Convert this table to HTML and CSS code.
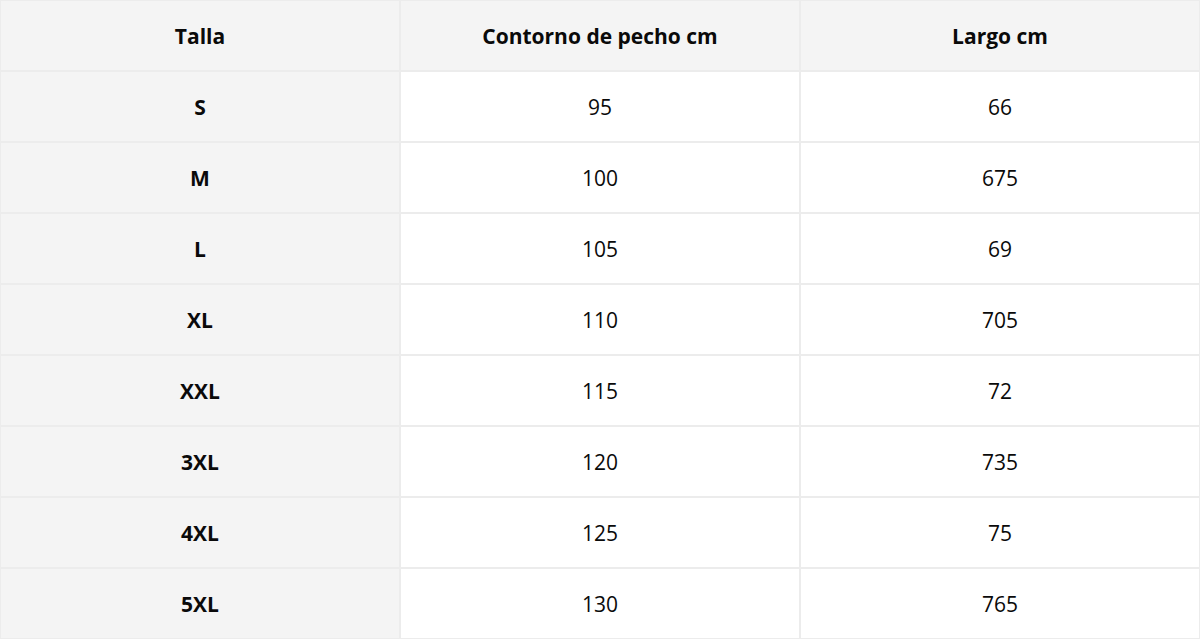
FILE: index.html
```html
<!DOCTYPE html>
<html lang="es">
<head>
<meta charset="utf-8">
<link rel="stylesheet" href="styles.css">
</head>
<body>
<table class="sizes">
  <thead>
    <tr><th>Talla</th><th>Contorno de pecho cm</th><th>Largo cm</th></tr>
  </thead>
  <tbody>
    <tr><th>S</th><td>95</td><td>66</td></tr>
    <tr><th>M</th><td>100</td><td>675</td></tr>
    <tr><th>L</th><td>105</td><td>69</td></tr>
    <tr><th>XL</th><td>110</td><td>705</td></tr>
    <tr><th>XXL</th><td>115</td><td>72</td></tr>
    <tr><th>3XL</th><td>120</td><td>735</td></tr>
    <tr><th>4XL</th><td>125</td><td>75</td></tr>
    <tr><th>5XL</th><td>130</td><td>765</td></tr>
  </tbody>
</table>
</body>
</html>
```
FILE: styles.css
```css
html, body {
  margin: 0;
  padding: 0;
  background: #ffffff;
}
.sizes {
  width: 1200px;
  border-collapse: separate;
  border-spacing: 0;
  table-layout: fixed;
  font-family: "Open Sans", "Liberation Sans", sans-serif;
  font-size: 21px;
  color: #0a0a0a;
}
.sizes th,
.sizes td {
  height: 69px;
  padding: 0;
  border: 1px solid #ececec;
  text-align: center;
  vertical-align: middle;
}
.sizes th {
  font-weight: 700;
  background: #f4f4f4;
}
.sizes td {
  font-weight: 400;
  background: #ffffff;
}
```
